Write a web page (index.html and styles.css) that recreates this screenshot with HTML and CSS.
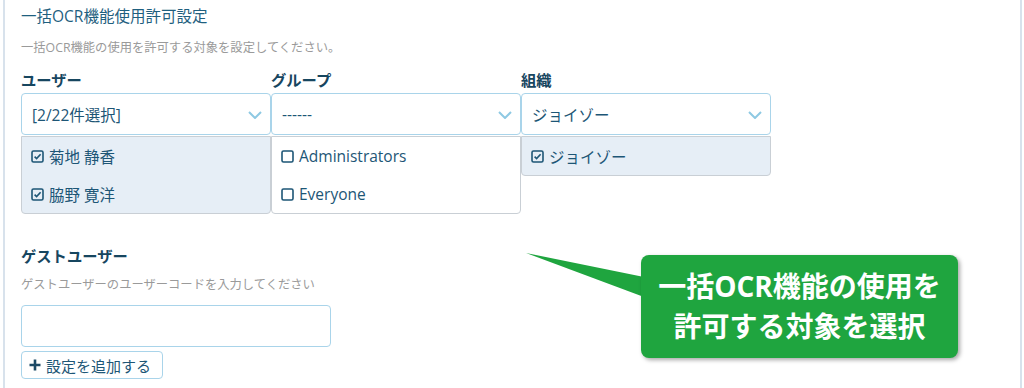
FILE: index.html
```html
<!DOCTYPE html>
<html lang="ja">
<head>
<meta charset="utf-8">
<link rel="stylesheet" href="styles.css">
</head>
<body>
<div class="panel">
  <h1 class="title">一括OCR機能使用許可設定</h1>
  <p class="hint first">一括OCR機能の使用を許可する対象を設定してください。</p>
  <div class="columns">
    <div class="col">
      <div class="label">ユーザー</div>
      <div class="select"><span>[2/22件選択]</span><svg class="chev" viewBox="0 0 14 8"><path d="M1 1 L7 7 L13 1" fill="none" stroke="#8ec9e3" stroke-width="2"/></svg></div>
      <ul class="list shaded">
        <li><svg class="cb" viewBox="0 0 13 13"><rect x="1" y="1" width="11" height="11" rx="1.5" fill="none" stroke="#1d5676" stroke-width="1.6"/><path d="M3.6 6.6 L5.6 8.6 L9.6 4.2" fill="none" stroke="#1d5676" stroke-width="1.6"/></svg>菊地 静香</li>
        <li><svg class="cb" viewBox="0 0 13 13"><rect x="1" y="1" width="11" height="11" rx="1.5" fill="none" stroke="#1d5676" stroke-width="1.6"/><path d="M3.6 6.6 L5.6 8.6 L9.6 4.2" fill="none" stroke="#1d5676" stroke-width="1.6"/></svg>脇野 寛洋</li>
      </ul>
    </div>
    <div class="col">
      <div class="label">グループ</div>
      <div class="select"><span>------</span><svg class="chev" viewBox="0 0 14 8"><path d="M1 1 L7 7 L13 1" fill="none" stroke="#8ec9e3" stroke-width="2"/></svg></div>
      <ul class="list">
        <li><svg class="cb" viewBox="0 0 13 13"><rect x="1" y="1" width="11" height="11" rx="1.5" fill="none" stroke="#1d5676" stroke-width="1.6"/></svg>Administrators</li>
        <li><svg class="cb" viewBox="0 0 13 13"><rect x="1" y="1" width="11" height="11" rx="1.5" fill="none" stroke="#1d5676" stroke-width="1.6"/></svg>Everyone</li>
      </ul>
    </div>
    <div class="col">
      <div class="label">組織</div>
      <div class="select"><span>ジョイゾー</span><svg class="chev" viewBox="0 0 14 8"><path d="M1 1 L7 7 L13 1" fill="none" stroke="#8ec9e3" stroke-width="2"/></svg></div>
      <ul class="list shaded">
        <li><svg class="cb" viewBox="0 0 13 13"><rect x="1" y="1" width="11" height="11" rx="1.5" fill="none" stroke="#1d5676" stroke-width="1.6"/><path d="M3.6 6.6 L5.6 8.6 L9.6 4.2" fill="none" stroke="#1d5676" stroke-width="1.6"/></svg>ジョイゾー</li>
      </ul>
    </div>
  </div>
  <div class="label guest">ゲストユーザー</div>
  <p class="hint second">ゲストユーザーのユーザーコードを入力してください</p>
  <div class="input"></div>
  <button class="add"><svg class="plus" viewBox="0 0 12 12"><path d="M6 0.5 V11.5 M0.5 6 H11.5" stroke="#1d4a66" stroke-width="2.6"/></svg>設定を追加する</button>

  <svg class="pointer" viewBox="0 0 120 50" width="120" height="50"><path d="M0 0 L118 24 L118 44 Z" fill="#1fa53f"/></svg>
  <div class="callout">一括OCR機能の使用を<br>許可する対象を選択</div>
</div>
</body>
</html>
```

FILE: styles.css
```css
* { box-sizing: border-box; }
html, body { margin: 0; padding: 0; background: #fff; }
body {
  font-family: "Open Sans", "Noto Sans CJK JP", sans-serif;
  color: #1d5676;
}
.panel {
  position: relative;
  margin: 0 2px 0 3px;
  height: 388px;
  border-left: 2px solid #d8e2ec;
  border-right: 2px solid #d8e2ec;
  padding: 5px 0 0 16px;
  overflow: hidden;
}
.title {
  margin: 0;
  font-size: 15.5px;
  line-height: 22px;
  font-weight: 400;
  color: #1f5f7f;
}
.hint {
  margin: 0;
  font-size: 12.3px;
  line-height: 18px;
  color: #9a9a9a;
}
.hint.first { margin-top: 12px; }
.columns {
  display: flex;
  margin-top: 13px;
  align-items: flex-start;
}
.col { width: 250px; }
.label {
  font-size: 15.3px;
  line-height: 20px;
  font-weight: 700;
  color: #17465f;
}
.select {
  margin-top: 3px;
  height: 42px;
  border: 1px solid #a9d4ea;
  border-radius: 4px;
  display: flex;
  align-items: center;
  justify-content: space-between;
  padding: 0 8px 0 10px;
  font-size: 15.5px;
  color: #1d5676;
  background: #fff;
}
.chev { width: 14px; height: 8px; margin-top: 2px; }
.list {
  list-style: none;
  margin: 1px 0 0 0;
  padding: 0;
  border: 1px solid #c9cfd5;
  border-radius: 0 0 4px 4px;
  background: #fff;
}
.list.shaded { background: #e6eef6; }
.list li {
  height: 38px;
  display: flex;
  align-items: center;
  padding-left: 9px;
  font-size: 15.5px;
  color: #1d5676;
}
.cb { width: 13px; height: 13px; margin-right: 5px; }
.guest { margin-top: 32px; }
.hint.second { margin-top: 10px; }
.input {
  margin-top: 11px;
  width: 310px;
  height: 42px;
  border: 1px solid #a9d4ea;
  border-radius: 4px;
}
.add {
  margin-top: 4px;
  height: 28px;
  width: 142px;
  display: flex;
  align-items: center;
  padding: 0 0 0 7px;
  border: 1px solid #a9d4ea;
  border-radius: 4px;
  background: #fff;
  font-family: inherit;
  font-size: 15px;
  color: #1d5676;
}
.plus { width: 12px; height: 12px; margin-right: 5px; }
.pointer {
  position: absolute;
  left: 521px;
  top: 253px;
}
.callout {
  position: absolute;
  left: 636px;
  top: 255px;
  width: 317px;
  height: 103px;
  background: #1fa53f;
  border-radius: 8px;
  box-shadow: 2px 2px 4px rgba(0,0,0,0.35);
  color: #fff;
  font-weight: 700;
  font-size: 28px;
  line-height: 40px;
  text-align: center;
  padding-top: 11px;
}
```
